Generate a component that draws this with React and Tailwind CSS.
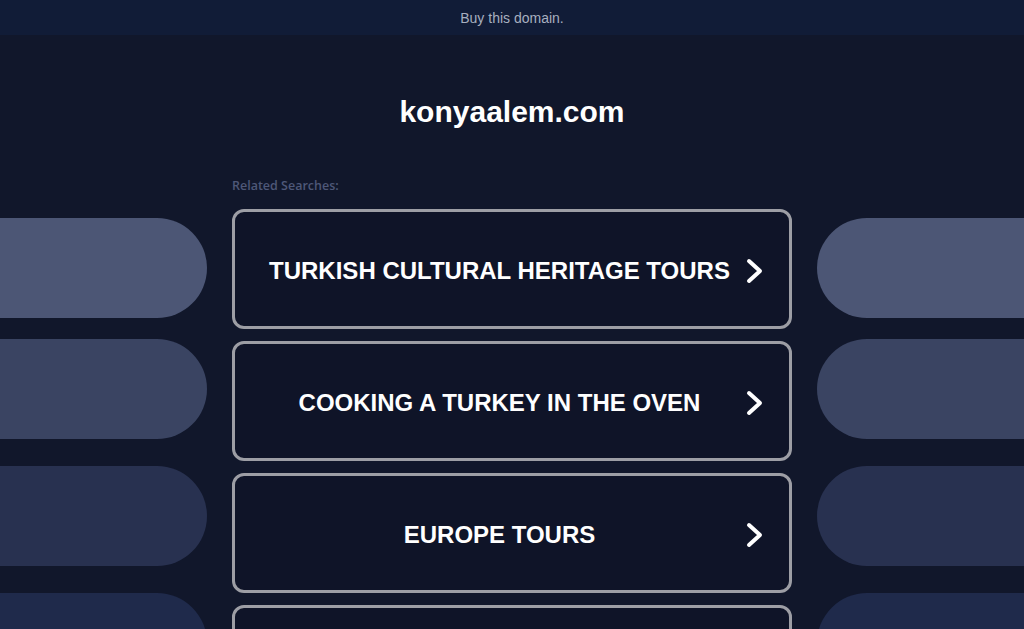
import React from "react";

const searches = [
  "TURKISH CULTURAL HERITAGE TOURS",
  "COOKING A TURKEY IN THE OVEN",
  "EUROPE TOURS",
  "",
];

const pills = [
  { color: "bg-[#4c5675]", mt: "mt-[9px]" },
  { color: "bg-[#3a4462]", mt: "mt-[21px]" },
  { color: "bg-[#283150]", mt: "mt-[27px]" },
  { color: "bg-[#1f2a4b]", mt: "mt-[27px]" },
];

const Chevron = () => (
  <svg width="20" height="26" viewBox="0 0 20 26" className="shrink-0">
    <path d="M4 3 L15 13 L4 23" fill="none" stroke="#ffffff" strokeWidth="4" strokeLinecap="round" strokeLinejoin="round" />
  </svg>
);

const PillColumn = ({ side }) => (
  <div className="flex flex-col pt-[30px]">
    {pills.map((p, i) => (
      <div
        key={i}
        className={`${p.mt} h-[100px] shrink-0 ${p.color} ${side === "left" ? "rounded-r-[50px]" : "rounded-l-[50px]"}`}
      />
    ))}
  </div>
);

export default function App() {
  return (
    <div className="h-[629px] overflow-hidden bg-[#11172b] font-['Liberation_Sans',Arial,sans-serif]">
      <div className="h-[35px] bg-[#111c37] flex items-center justify-center">
        <span className="text-[14px] text-[#a7afbf] mt-[1px]">Buy this domain.</span>
      </div>

      <h1 className="text-center text-[30px] font-bold text-white mt-[59px] leading-[36px]">konyaalem.com</h1>

      <div className="grid grid-cols-[1fr_560px_1fr] gap-x-[25px] mt-[49px]">
        <PillColumn side="left" />

        <div className="flex flex-col">
          <p className="text-[12.5px] text-[#4e5878] font-['Open_Sans',sans-serif] font-semibold leading-[14px] h-[16px]">
            Related Searches:
          </p>
          <div className="flex flex-col gap-[12px] mt-[14px]">
            {searches.map((s, i) => (
              <div
                key={i}
                className="h-[120px] shrink-0 rounded-[12px] border-[3px] border-[#9d9ea5] bg-[#0f1428] flex items-center pl-[32px] pr-[24px] pt-[4px] gap-[13px]"
              >
                <span className="flex-1 text-center text-white font-bold text-[24px] leading-none">{s}</span>
                <Chevron />
              </div>
            ))}
          </div>
        </div>

        <PillColumn side="right" />
      </div>
    </div>
  );
}
